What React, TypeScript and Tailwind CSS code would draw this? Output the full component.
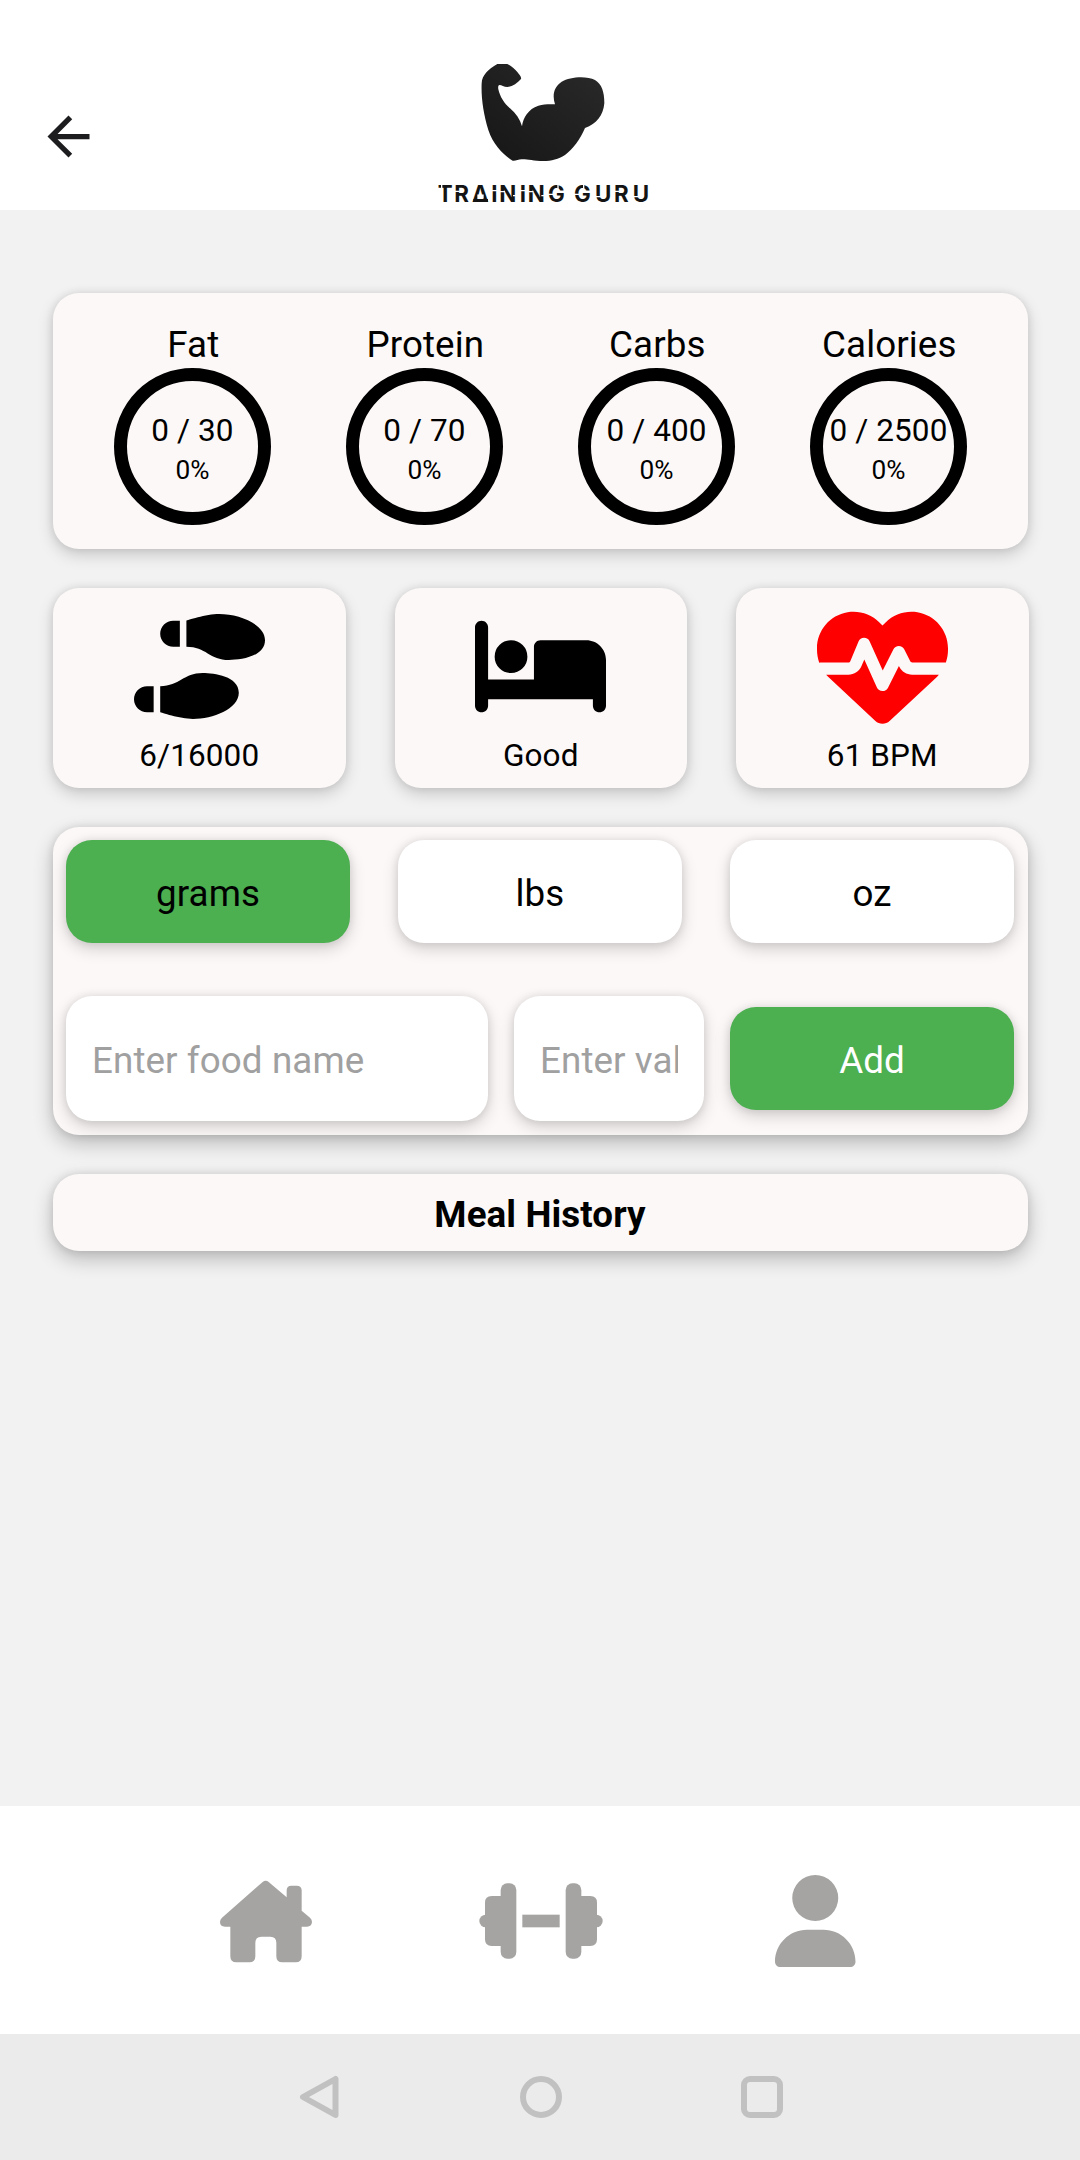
import type { ReactNode } from "react";
import { FaShoePrints, FaBed, FaHeartPulse, FaUser } from "react-icons/fa6";
import { MdArrowBack } from "react-icons/md";

const softShadow = "shadow-[0_0_8px_rgba(0,0,0,0.09),0_6px_16px_rgba(0,0,0,0.17)]";
const deepShadow = "shadow-[0_0_8px_rgba(0,0,0,0.10),0_8px_20px_rgba(0,0,0,0.24)]";

function Ring({ label, value }: { label: string; value: string }) {
  return (
    <div className="flex w-[232px] flex-col items-center">
      <div className="h-[43px] pl-[1.5px] text-[36.75px] leading-[43px]">{label}</div>
      <div className="mt-[2px] flex h-[157px] w-[157.5px] flex-col items-center rounded-full border-[13px] border-black pt-[31px]">
        <div className="text-[31.5px] leading-[37px] whitespace-nowrap">{value}</div>
        <div className="mt-[6px] text-[26.25px] leading-[31px]">0%</div>
      </div>
    </div>
  );
}

function Stat({ children, label }: { children: ReactNode; label: string }) {
  return (
    <div className={`flex h-[200px] w-[292.5px] shrink-0 flex-col items-center rounded-[26px] bg-[#fcf8f7] ${softShadow}`}>
      <div className="mt-[13px] flex h-[131px] w-[131px] items-center justify-center">{children}</div>
      <div className="mt-[5px] text-[31.5px] leading-[37px]">{label}</div>
    </div>
  );
}

function Pill({ label, className }: { label: string; className: string }) {
  return (
    <button
      className={`flex h-[103px] w-[284px] items-center justify-center rounded-[26px] pt-[4px] text-[36.75px] leading-[43px] tracking-[0.1px] ${softShadow} ${className}`}
    >
      {label}
    </button>
  );
}

function Field({ label, className }: { label: string; className: string }) {
  return (
    <div className={`flex h-[125px] items-center rounded-[26px] bg-white px-[26px] pt-[4px] ${softShadow} ${className}`}>
      <div className="w-full overflow-hidden text-[36.75px] leading-[43px] tracking-[0.1px] whitespace-nowrap text-[#a0a0a0]">
        {label}
      </div>
    </div>
  );
}

function Logo() {
  return (
    <svg width="235" height="146" viewBox="75 72 705 438">
      <defs>
        <linearGradient id="arm" x1="0" y1="1" x2="1" y2="0">
          <stop offset="0" stopColor="#161616" />
          <stop offset="1" stopColor="#2a2a2a" />
        </linearGradient>
      </defs>
      <path
        fill="url(#arm)"
        d="M292 72H322C335 78 345 88 352 96C358 104 365 110 363 117C352 130 338 139 322 141C312 141 304 135 299 135C294 136 294 142 295 148C300 170 312 190 330 205C348 220 360 238 366 259C370 232 385 207 415 197C432 192 450 193 465 193C456 165 462 140 485 125C510 110 560 107 585 120C605 132 613 155 613 190C610 225 590 252 555 264C540 300 520 325 495 345C475 358 455 363 430 363C400 363 380 357 365 358C355 358 345 364 338 362C310 345 280 315 265 270C250 220 243 170 245 130C246 105 265 88 292 72Z"
      />
      <text
        y="486"
        x="113 163 216 274 298 359 383 444 500 522 585 642 698"
        fontFamily="Inter, sans-serif"
        fontSize="67"
        fontWeight="700"
        fill="#141414"
      >
        TRAINING GURU
      </text>
      {/* stencil gaps in the lettering */}
      <g stroke="#fff" strokeWidth="4">
        <path d="M125 434V449M163 454H179M272 452H292M299 455H315M339 467H353M357 452H377M384 455H400M424 467H438M444 463H460M474 434V448M522 463H538M551 434V448M584 470H602M643 454H659M697 470H716" />
      </g>
      {/* triangular A */}
      <path d="M232 469H251" stroke="#fff" strokeWidth="11" />
      <path d="M220 481.5H264" stroke="#141414" strokeWidth="9" />
    </svg>
  );
}

function HomeIcon() {
  return (
    <svg width="92" height="85" viewBox="60 55 276 255" fill="#a5a4a2">
      <path d="M188 64Q197 56 206 64L260 110V89Q260 75 274 75H290Q305 75 305 89V150L330 171Q336 176 336 184Q335 198 321 198H305V287Q305 305 287 305H247Q229 305 229 287V246Q229 228 211 228H184Q166 228 166 246V287Q166 305 148 305H109Q91 305 91 287V198H75Q60 198 60 184Q60 176 66 171Z" />
    </svg>
  );
}

function DumbbellIcon() {
  return (
    <svg width="124" height="76" viewBox="42 69 372 228" fill="#a5a4a2">
      <rect x="107" y="70" width="47" height="226" rx="20" />
      <path d="M120 108H80Q60 108 60 128V238Q60 258 80 258H120Z" />
      <path d="M62 164A19 19 0 0 0 62 202Z" />
      <rect x="172" y="164" width="112" height="38" />
      <rect x="302" y="70" width="47" height="226" rx="20" />
      <path d="M336 108H376Q396 108 396 128V238Q396 258 376 258H336Z" />
      <path d="M394 164A19 19 0 0 1 394 202Z" />
    </svg>
  );
}

export default function App() {
  return (
    <div className="flex h-[2160px] w-[1080px] flex-col bg-[#f2f2f2] font-[Roboto,sans-serif] text-black">
      <header className="flex h-[210px] shrink-0 bg-white pt-[64px] pl-[37px]">
        <MdArrowBack className="mt-[41px] h-[63px] w-[63px] text-[#1d1d1f]" />
        <div className="ml-[325px]">
          <Logo />
        </div>
      </header>

      <main className="flex grow flex-col px-[53px] pt-[83px]">
        <section className={`flex h-[256px] w-[975px] justify-center rounded-[26px] bg-[#fcf8f7] pt-[30px] tracking-[0.1px] ${softShadow}`}>
          <Ring label="Fat" value="0 / 30" />
          <Ring label="Protein" value="0 / 70" />
          <Ring label="Carbs" value="0 / 400" />
          <Ring label="Calories" value="0 / 2500" />
        </section>

        <section className="mt-[39px] flex gap-[49px] tracking-[0.1px]">
          <Stat label="6/16000">
            <FaShoePrints className="h-[105px] w-[131px]" />
          </Stat>
          <Stat label="Good">
            <FaBed className="h-[105px] w-[131px]" />
          </Stat>
          <Stat label="61 BPM">
            <FaHeartPulse className="h-[131px] w-[131px] text-[#ff0000]" />
          </Stat>
        </section>

        <section className={`mt-[39px] flex h-[308px] w-[975px] flex-col justify-between rounded-[26px] bg-[#fcf8f7] pt-[13px] pr-[14px] pb-[14px] pl-[13px] ${deepShadow}`}>
          <div className="flex justify-between">
            <Pill label="grams" className="bg-[#4caf50]" />
            <Pill label="lbs" className="bg-white" />
            <Pill label="oz" className="bg-white" />
          </div>
          <div className="flex items-center justify-between">
            <Field label="Enter food name" className="w-[422px]" />
            <Field label="Enter value" className="w-[190px]" />
            <Pill label="Add" className="bg-[#4caf50] text-white" />
          </div>
        </section>

        <section className={`mt-[39px] flex h-[77px] w-[975px] items-center justify-center rounded-[26px] bg-[#fcf8f7] pt-[4px] pr-[1px] text-[36.75px] leading-[43px] font-bold tracking-[0.1px] ${deepShadow}`}>
          Meal History
        </section>
      </main>

      <nav className="flex h-[228px] shrink-0 items-center justify-center bg-white pt-[2px] pl-[1px]">
        <div className="flex w-[275px] justify-center">
          <HomeIcon />
        </div>
        <div className="flex w-[275px] justify-center">
          <DumbbellIcon />
        </div>
        <div className="flex w-[274px] justify-center">
          <FaUser className="h-[92px] w-[80.5px] text-[#a5a4a2]" />
        </div>
      </nav>

      <footer className="flex h-[126px] shrink-0 items-center justify-center gap-[179px] bg-[#ebebeb] pl-[1px]">
        <svg width="42" height="44" viewBox="0 0 42 44" fill="none" stroke="#c1c1c1" strokeWidth="6" strokeLinejoin="round">
          <path d="M36.5 4V40L4 22Z" />
        </svg>
        <svg width="42" height="42" viewBox="0 0 42 42" fill="none" stroke="#c1c1c1" strokeWidth="6">
          <circle cx="21" cy="21" r="18" />
        </svg>
        <svg width="42" height="42" viewBox="0 0 42 42" fill="none" stroke="#c1c1c1" strokeWidth="6">
          <rect x="3" y="3" width="36" height="36" rx="6" />
        </svg>
      </footer>
    </div>
  );
}
